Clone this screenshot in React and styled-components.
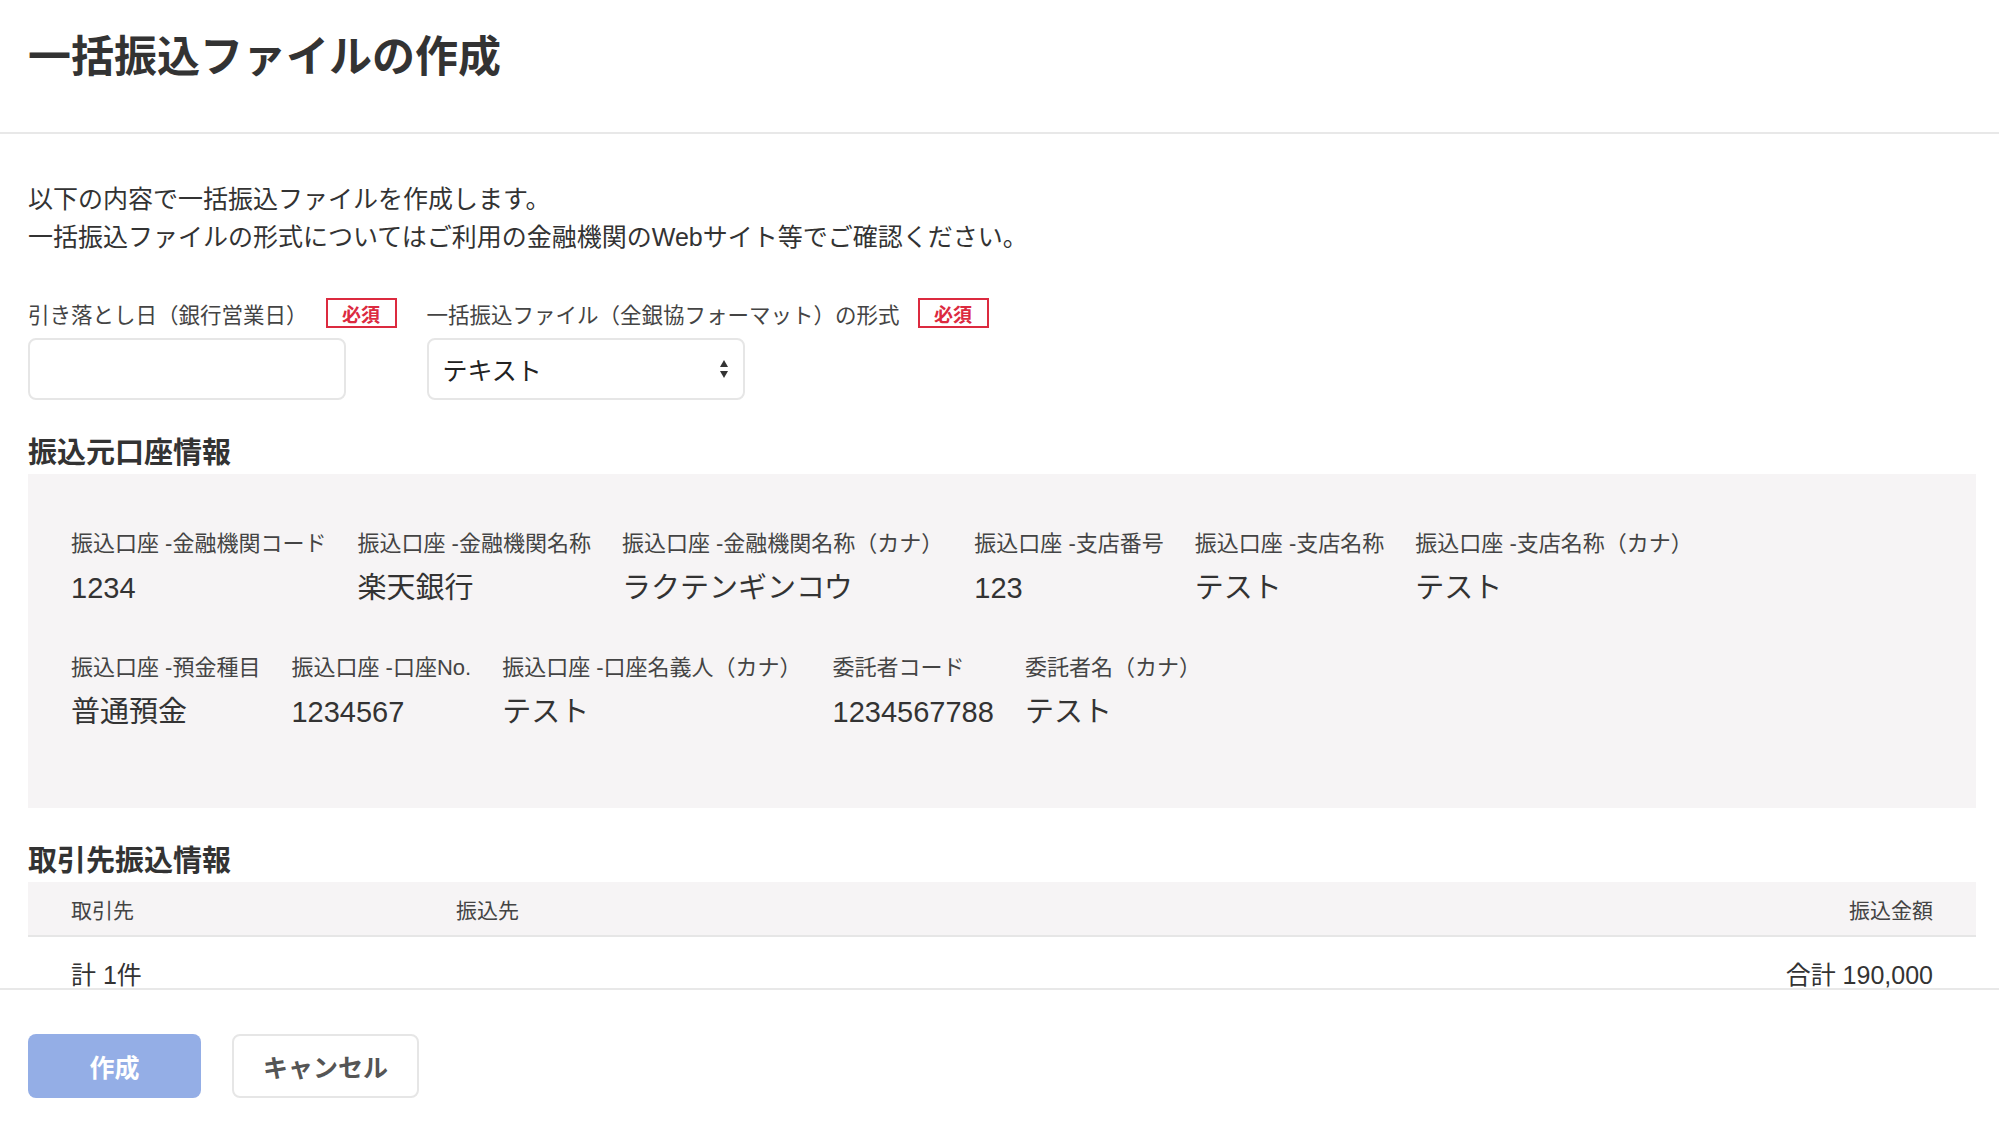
import styled, { createGlobalStyle } from "styled-components";

const GlobalStyle = createGlobalStyle`
  * { box-sizing: border-box; }
  html, body { margin: 0; padding: 0; }
  body {
    background: #fff;
    color: #333;
    font-family: "Liberation Sans", "Noto Sans CJK JP", sans-serif;
  }
`;

const sourceRows = [
  [
    { label: "振込口座 -金融機関コード", value: "1234" },
    { label: "振込口座 -金融機関名称", value: "楽天銀行" },
    { label: "振込口座 -金融機関名称（カナ）", value: "ラクテンギンコウ" },
    { label: "振込口座 -支店番号", value: "123" },
    { label: "振込口座 -支店名称", value: "テスト" },
    { label: "振込口座 -支店名称（カナ）", value: "テスト" },
  ],
  [
    { label: "振込口座 -預金種目", value: "普通預金" },
    { label: "振込口座 -口座No.", value: "1234567" },
    { label: "振込口座 -口座名義人（カナ）", value: "テスト" },
    { label: "委託者コード", value: "1234567788" },
    { label: "委託者名（カナ）", value: "テスト" },
  ],
];

function SelectArrows() {
  return (
    <svg width="12" height="22" viewBox="0 0 12 22">
      <polygon points="2,9 6,2 10,9" fill="#333" />
      <polygon points="2,13 10,13 6,20" fill="#333" />
    </svg>
  );
}

export default function App() {
  return (
    <>
      <GlobalStyle />
      <Page>
        <Header>
          <Title>一括振込ファイルの作成</Title>
        </Header>
        <Content>
          <Intro>
            以下の内容で一括振込ファイルを作成します。
            <br />
            一括振込ファイルの形式についてはご利用の金融機関のWebサイト等でご確認ください。
          </Intro>

          <FormRow>
            <Field>
              <LabelRow>
                <FieldLabel>引き落とし日（銀行営業日）</FieldLabel>
                <Required>必須</Required>
              </LabelRow>
              <TextInput type="text" />
            </Field>
            <Field>
              <LabelRow>
                <FieldLabel>一括振込ファイル（全銀協フォーマット）の形式</FieldLabel>
                <Required>必須</Required>
              </LabelRow>
              <SelectBox>
                <span>テキスト</span>
                <SelectArrows />
              </SelectBox>
            </Field>
          </FormRow>

          <SectionTitle>振込元口座情報</SectionTitle>
          <InfoPanel>
            {sourceRows.map((row, i) => (
              <InfoRow key={i}>
                {row.map((item) => (
                  <InfoItem key={item.label}>
                    <InfoLabel>{item.label}</InfoLabel>
                    <InfoValue>{item.value}</InfoValue>
                  </InfoItem>
                ))}
              </InfoRow>
            ))}
          </InfoPanel>

          <SectionTitle>取引先振込情報</SectionTitle>
          <TableHead>
            <span>取引先</span>
            <span>振込先</span>
            <RightCell>振込金額</RightCell>
          </TableHead>
          <TableRow>
            <span>計 1件</span>
            <span />
            <RightCell>合計 190,000</RightCell>
          </TableRow>
        </Content>
        <Footer>
          <PrimaryButton type="button">作成</PrimaryButton>
          <SecondaryButton type="button">キャンセル</SecondaryButton>
        </Footer>
      </Page>
    </>
  );
}

const Page = styled.div`
  height: 100vh;
  display: flex;
  flex-direction: column;
  overflow: hidden;
`;

const Header = styled.header`
  flex-shrink: 0;
  height: 134px;
  padding: 31px 28px 0;
  border-bottom: 2px solid #e8e8e8;
`;

const Title = styled.h1`
  margin: 0;
  font-size: 43px;
  line-height: 52px;
  font-weight: 700;
  color: #333;
`;

const Content = styled.main`
  flex: 1;
  min-height: 0;
  overflow: hidden;
  padding: 46px 23px 0 28px;
`;

const Intro = styled.p`
  margin: 0;
  font-size: 25px;
  line-height: 38px;
  color: #333;
`;

const FormRow = styled.div`
  display: flex;
  gap: 30px;
  margin-top: 42px;
`;

const Field = styled.div`
  display: flex;
  flex-direction: column;
  gap: 10px;
`;

const LabelRow = styled.div`
  display: flex;
  align-items: center;
  gap: 18px;
  height: 30px;
`;

const FieldLabel = styled.span`
  font-size: 21.5px;
  color: #444;
`;

const Required = styled.span`
  display: inline-flex;
  align-items: center;
  justify-content: center;
  width: 71px;
  height: 30px;
  border: 2px solid #dc2a3f;
  color: #dc2a3f;
  font-size: 19px;
  font-weight: 700;
`;

const TextInput = styled.input`
  width: 318px;
  height: 62px;
  border: 2px solid #e6e6e6;
  border-radius: 8px;
  background: #fff;
  outline: none;
`;

const SelectBox = styled.div`
  width: 318px;
  height: 62px;
  border: 2px solid #e6e6e6;
  border-radius: 8px;
  background: #fff;
  display: flex;
  align-items: center;
  justify-content: space-between;
  padding: 0 13px 0 14px;
  font-size: 25px;
  color: #222;
`;

const SectionTitle = styled.h2`
  margin: 33px 0 1px;
  font-size: 29px;
  line-height: 40px;
  font-weight: 700;
  color: #333;
`;

const InfoPanel = styled.section`
  background: #f6f4f5;
  padding: 55px 43px 76px;
  display: flex;
  flex-direction: column;
  gap: 45px;
`;

const InfoRow = styled.div`
  display: flex;
  gap: 31px;
`;

const InfoItem = styled.div`
  display: flex;
  flex-direction: column;
`;

const InfoLabel = styled.span`
  font-size: 22px;
  line-height: 30px;
  color: #444;
  white-space: nowrap;
`;

const InfoValue = styled.span`
  margin-top: 9px;
  font-size: 29px;
  line-height: 40px;
  color: #333;
  white-space: nowrap;
`;

const TableHead = styled.div`
  display: grid;
  grid-template-columns: 385px 1fr auto;
  align-items: center;
  height: 55px;
  padding: 0 43px;
  background: #f6f4f5;
  border-bottom: 2px solid #e6e6e6;
  font-size: 21px;
  color: #444;
`;

const TableRow = styled.div`
  display: grid;
  grid-template-columns: 385px 1fr auto;
  align-items: center;
  height: 72px;
  padding: 0 43px;
  font-size: 25px;
  color: #333;
`;

const RightCell = styled.span`
  text-align: right;
`;

const Footer = styled.footer`
  flex-shrink: 0;
  height: 139px;
  border-top: 2px solid #e8e8e8;
  background: #fff;
  display: flex;
  align-items: flex-start;
  gap: 31px;
  padding: 44px 28px 0;
`;

const Button = styled.button`
  height: 64px;
  border-radius: 8px;
  font-family: inherit;
  font-size: 25px;
  font-weight: 700;
  cursor: pointer;
`;

const PrimaryButton = styled(Button)`
  width: 173px;
  border: none;
  background: #94aee6;
  color: #fff;
`;

const SecondaryButton = styled(Button)`
  width: 187px;
  border: 2px solid #e6e6e6;
  background: #fff;
  color: #555;
`;
